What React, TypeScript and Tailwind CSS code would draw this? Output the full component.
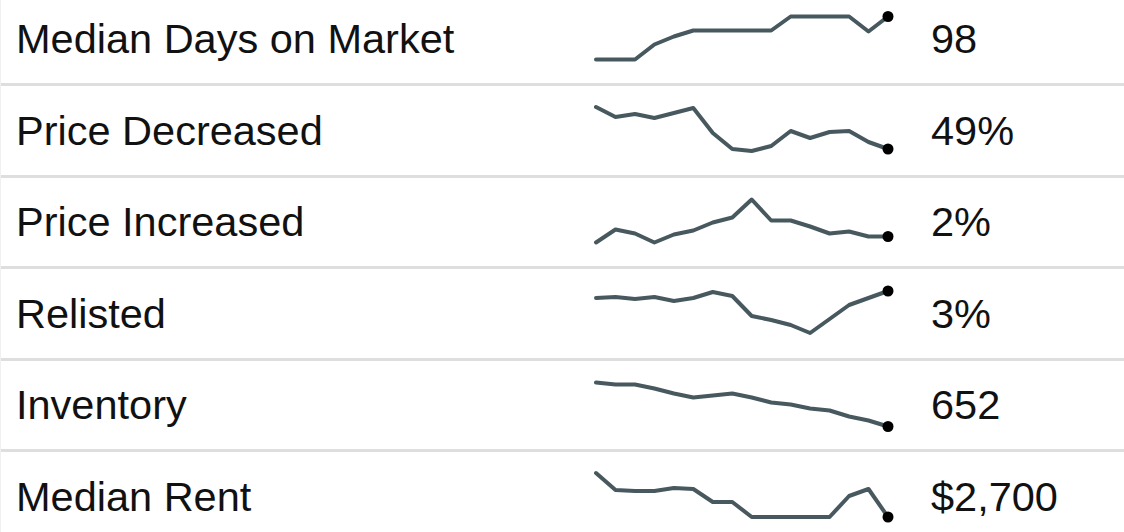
const xs = [596, 615.5, 635, 654.4, 673.9, 693.3, 712.8, 732.3, 751.7, 771.2, 790.7, 810.1, 829.6, 849.1, 868.5, 888];

// y values are page coordinates read off the reference; each row subtracts its own top
const rows = [
  { label: "Median Days on Market", value: "98", ys: [59, 59, 59, 44, 36, 30, 30, 30, 30, 30, 16, 16, 16, 16, 31, 16] },
  { label: "Price Decreased", value: "49%", ys: [107, 117, 114, 118, 113, 108, 133, 149, 151, 146, 131, 138, 132, 131, 142, 149] },
  { label: "Price Increased", value: "2%", ys: [242, 229, 233, 242, 234, 230, 222, 217, 199, 220, 220, 226, 233, 231, 236, 236] },
  { label: "Relisted", value: "3%", ys: [298, 297, 299, 297, 301, 298, 292, 296, 316, 320, 325, 333, 319, 305, 298, 291] },
  { label: "Inventory", value: "652", ys: [382, 384, 384, 388, 393, 397, 395, 393, 397, 402, 404, 408, 410, 416, 420, 426] },
  { label: "Median Rent", value: "$2,700", ys: [473, 490, 491, 491, 488, 489, 502, 502, 517, 517, 517, 517, 517, 496, 489, 517] },
];

function Sparkline({ ys, top }: { ys: number[]; top: number }) {
  const pts = xs.map((x, i) => `${x - 580},${ys[i] - top}`).join(" ");
  const last = ys.length - 1;
  return (
    <svg width="320" height="88.5" viewBox="0 0 320 88.5" className="shrink-0">
      <polyline points={pts} fill="none" stroke="#47595f" strokeWidth="4" strokeLinejoin="round" strokeLinecap="round" />
      <circle cx={xs[last] - 580} cy={ys[last] - top} r="5.5" fill="#000" />
    </svg>
  );
}

export default function App() {
  return (
    <div className="w-[1124px] h-[532px] overflow-hidden bg-white border-l border-[#f0f0f0]" style={{ fontFamily: '"Liberation Sans", Arial, sans-serif' }}>
      <div className="-mt-[5.5px]">
        {rows.map((r, i) => (
          <div key={r.label} className="flex items-center h-[91.5px] border-b-[3px] border-[#dedede] text-[41.5px] leading-none text-[#111]">
            <div className="w-[579px] pl-[15px] shrink-0">{r.label}</div>
            <Sparkline ys={r.ys} top={-5.5 + 91.5 * i} />
            <div className="pl-[31px]">{r.value}</div>
          </div>
        ))}
      </div>
    </div>
  );
}
